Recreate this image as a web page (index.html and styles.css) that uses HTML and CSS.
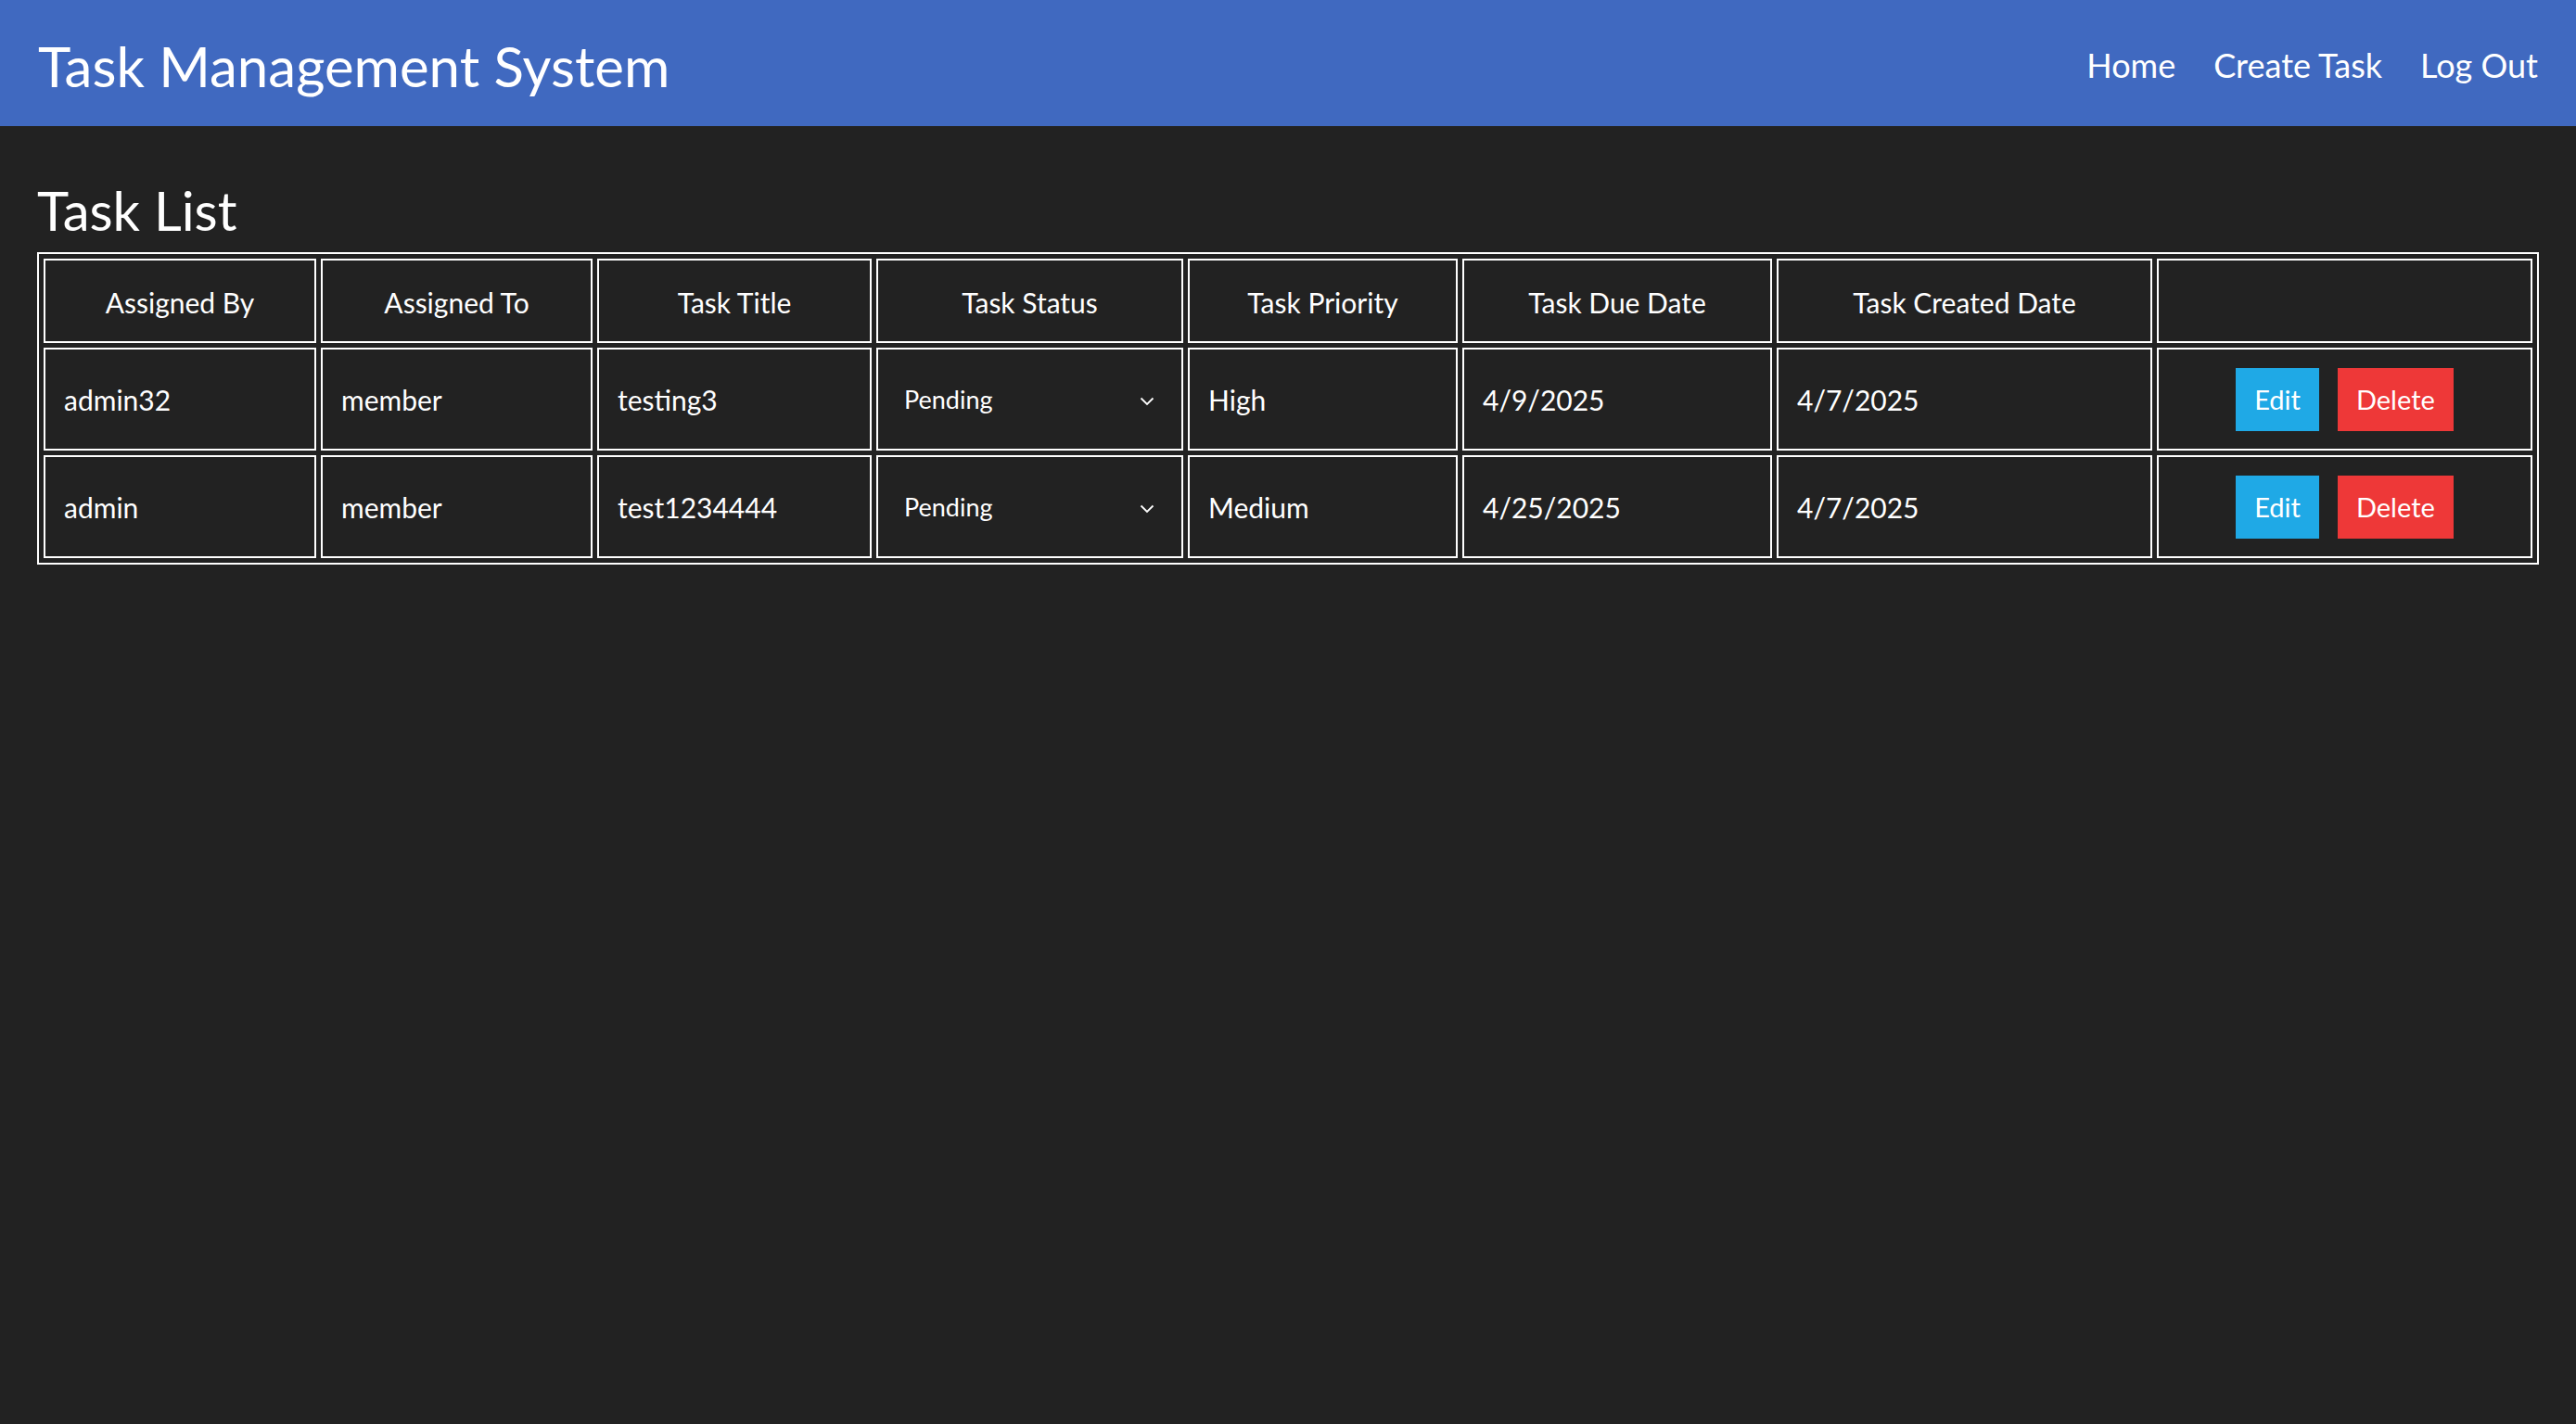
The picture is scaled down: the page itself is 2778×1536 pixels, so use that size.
FILE: index.html
```html
<!DOCTYPE html>
<html lang="en">
<head>
<meta charset="utf-8">
<title>Task Management System</title>
<link rel="stylesheet" href="styles.css">
</head>
<body>
<header class="topbar">
  <div class="brand">Task Management System</div>
  <nav class="nav">
    <a href="#">Home</a>
    <a href="#">Create Task</a>
    <a href="#">Log Out</a>
  </nav>
</header>
<main class="content">
  <h2 class="page-title">Task List</h2>
  <table class="tasks">
    <colgroup>
      <col class="col-by">
      <col class="col-to">
      <col class="col-title">
      <col class="col-status">
      <col class="col-priority">
      <col class="col-due">
      <col class="col-created">
      <col class="col-actions">
    </colgroup>
    <thead>
      <tr>
        <th>Assigned By</th>
        <th>Assigned To</th>
        <th>Task Title</th>
        <th>Task Status</th>
        <th>Task Priority</th>
        <th>Task Due Date</th>
        <th>Task Created Date</th>
        <th></th>
      </tr>
    </thead>
    <tbody>
      <tr>
        <td>admin32</td>
        <td>member</td>
        <td>testing3</td>
        <td>
          <div class="select-wrap">
            <select class="status-select">
              <option selected>Pending</option>
              <option>In Progress</option>
              <option>Completed</option>
            </select>
            <svg class="chevron" viewBox="0 0 16 10" aria-hidden="true"><polyline points="1.5,1.5 8,8 14.5,1.5" fill="none" stroke="#fff" stroke-width="1.8"/></svg>
          </div>
        </td>
        <td>High</td>
        <td>4/9/2025</td>
        <td>4/7/2025</td>
        <td class="actions">
          <div class="btn-row">
            <button class="btn btn-edit">Edit</button>
            <button class="btn btn-delete">Delete</button>
          </div>
        </td>
      </tr>
      <tr>
        <td>admin</td>
        <td>member</td>
        <td>test1234444</td>
        <td>
          <div class="select-wrap">
            <select class="status-select">
              <option selected>Pending</option>
              <option>In Progress</option>
              <option>Completed</option>
            </select>
            <svg class="chevron" viewBox="0 0 16 10" aria-hidden="true"><polyline points="1.5,1.5 8,8 14.5,1.5" fill="none" stroke="#fff" stroke-width="1.8"/></svg>
          </div>
        </td>
        <td>Medium</td>
        <td>4/25/2025</td>
        <td>4/7/2025</td>
        <td class="actions">
          <div class="btn-row">
            <button class="btn btn-edit">Edit</button>
            <button class="btn btn-delete">Delete</button>
          </div>
        </td>
      </tr>
    </tbody>
  </table>
</main>
</body>
</html>
```
FILE: styles.css
```css
html, body {
  margin: 0;
  padding: 0;
  background: #222222;
  min-height: 100%;
}

body {
  font-family: Lato, "Open Sans", sans-serif;
  color: #ffffff;
}

.topbar {
  box-sizing: border-box;
  height: 136px;
  padding: 0 41px;
  background: #4069c0;
  display: flex;
  align-items: center;
  justify-content: space-between;
}

.brand {
  margin-top: 5px;
  font-size: 60px;
  line-height: 1;
}

.nav {
  display: flex;
  gap: 41px;
  margin-top: 3px;
  font-size: 36px;
  line-height: 1;
}

.nav a {
  color: #ffffff;
  text-decoration: none;
}

.content {
  padding: 0 40px;
}

.page-title {
  margin: 62px 0 16px;
  font-size: 58px;
  font-weight: normal;
  line-height: 1;
}

.tasks {
  width: 100%;
  table-layout: fixed;
  border: 2px solid #ffffff;
  border-spacing: 5px;
}

.col-by { width: 294px; }
.col-to { width: 293px; }
.col-title { width: 296px; }
.col-status { width: 331px; }
.col-priority { width: 291px; }
.col-due { width: 334px; }
.col-created { width: 405px; }

.tasks th,
.tasks td {
  box-sizing: border-box;
  border: 2px solid #ffffff;
  font-size: 30px;
  font-weight: normal;
  vertical-align: middle;
}

.tasks th {
  height: 91px;
  padding: 2px 10px 0;
  text-align: center;
}

.tasks td {
  height: 111px;
  padding: 0 20px;
  text-align: left;
}

.select-wrap {
  position: relative;
}

.status-select {
  display: block;
  width: 100%;
  box-sizing: border-box;
  appearance: none;
  -webkit-appearance: none;
  background: transparent;
  border: none;
  color: #ffffff;
  font-family: inherit;
  font-size: 27px;
  padding: 4px 0 4px 8px;
  outline: none;
}

.status-select option {
  background: #222222;
  color: #ffffff;
}

.chevron {
  position: absolute;
  right: 9px;
  top: 50%;
  width: 16px;
  height: 10px;
  margin-top: -3px;
  pointer-events: none;
}

.btn-row {
  display: flex;
  justify-content: center;
  gap: 20px;
}

.btn {
  height: 68px;
  padding: 0 20px;
  border: none;
  border-radius: 0;
  color: #ffffff;
  font-family: inherit;
  font-size: 29px;
  cursor: pointer;
}

.btn-edit {
  background: #1fa9e6;
}

.btn-delete {
  background: #ee3838;
}
```
